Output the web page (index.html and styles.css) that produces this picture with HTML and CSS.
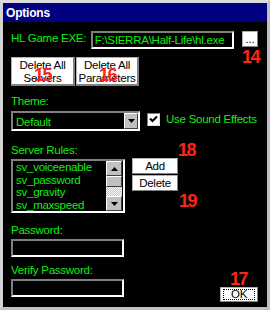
FILE: index.html
```html
<!DOCTYPE html>
<html lang="en">
<head>
<meta charset="UTF-8">
<title>Options</title>
<link rel="stylesheet" href="styles.css">
</head>
<body>
<div class="window">
    <div class="titlebar">Options</div>

    <div class="panel">
        <div class="exe-row">
            <span class="caption exe-caption">HL Game EXE:</span>
            <div class="field exe">F:\SIERRA\Half-Life\hl.exe</div>
            <button class="btn browse">...</button>
        </div>

        <div class="del-row">
            <button class="btn del servers">Delete All<br>Servers</button>
            <button class="btn del params">Delete All<br>Parameters</button>
        </div>

        <div class="caption gap-theme">Theme:</div>
        <div class="theme-row">
            <div class="field combo">
                <span class="combo-text">Default</span>
                <span class="raised drop"><svg width="7" height="4" viewBox="0 0 7 4"><path d="M0 0h7L3.5 4z" fill="#000"/></svg></span>
            </div>
            <label class="check">
                <span class="box"><svg width="9" height="9" viewBox="0 0 9 9"><path d="M1 3.5L3.5 6L8 1.5" stroke="#000" stroke-width="2" fill="none"/></svg></span>
                Use Sound Effects
            </label>
        </div>

        <div class="caption gap-rules">Server Rules:</div>
        <div class="rules-row">
            <div class="field list">
                <div class="items">
                    <div>sv_voiceenable</div>
                    <div>sv_password</div>
                    <div>sv_gravity</div>
                    <div>sv_maxspeed</div>
                </div>
                <div class="scrollbar">
                    <span class="raised arrow"><svg width="7" height="4" viewBox="0 0 7 4"><path d="M0 4h7L3.5 0z" fill="#000"/></svg></span>
                    <span class="raised thumb"></span>
                    <span class="track"></span>
                    <span class="raised arrow"><svg width="7" height="4" viewBox="0 0 7 4"><path d="M0 0h7L3.5 4z" fill="#000"/></svg></span>
                </div>
            </div>
            <div class="list-btns">
                <button class="btn small">Add</button>
                <button class="btn small">Delete</button>
            </div>
        </div>

        <div class="caption gap-pw">Password:</div>
        <div class="field pw"></div>

        <div class="caption gap-verify">Verify Password:</div>
        <div class="last-row">
            <div class="field pw"></div>
            <button class="btn ok"><span class="focus">OK</span></button>
        </div>

        <!-- callout numbers over the dialog -->
        <span class="tag t14">14</span>
        <span class="tag t15">15</span>
        <span class="tag t16">16</span>
        <span class="tag t18">18</span>
        <span class="tag t19">19</span>
        <span class="tag t17">17</span>
    </div>
</div>
</body>
</html>
```

FILE: styles.css
```css
* {
  box-sizing: border-box;
}
body {
  margin: 0;
  background: #c0c0c0;
  font-family: "Liberation Sans", Arial, sans-serif;
  font-size: 11.5px;
  letter-spacing: -0.25px;
  white-space: nowrap;
}
.window {
  width: 270px;
  height: 310px;
  display: flex;
  flex-direction: column;
  border: 3px solid #c0c0c0;
  border-top-color: #dcdcdc;
  border-left-color: #d4d4d4;
}
.titlebar {
  height: 19px;
  background: #000080;
  color: #fff;
  font-size: 12px;
  font-weight: bold;
  letter-spacing: -0.2px;
  line-height: 19px;
  padding: 1px 0 0 3px;
}
.panel {
  position: relative;
  flex: 1;
  background: #000;
  color: #10ee10;
  padding: 0 9px 0 8px;
}
.caption {
  display: block;
  line-height: 15px;
}
.field {
  background: #000;
  border: 2px solid;
  border-color: #808080 #fff #fff #808080;
}
.btn {
  background: #fff;
  color: #000;
  font: inherit;
  letter-spacing: inherit;
  padding: 0;
  border: 1px solid #b0b0b0;
  border-right-color: #808080;
  border-bottom-color: #808080;
}
.raised {
  display: flex;
  align-items: center;
  justify-content: center;
  background: #c0c0c0;
  border: 1px solid;
  border-color: #fff #404040 #404040 #fff;
}

.exe-row {
  display: flex;
  align-items: flex-start;
  margin-top: 9px;
}
.exe-caption {
  width: 80px;
}
.exe {
  width: 144px;
  height: 18px;
  line-height: 14px;
  padding-left: 2px;
}
.browse {
  width: 16px;
  height: 16px;
  margin-left: 8px;
  line-height: 12px;
}

.del-row {
  display: flex;
  gap: 1px;
  margin-top: 8px;
}
.del {
  height: 29px;
  line-height: 13px;
  padding-top: 1px;
  border-right-width: 2px;
  border-bottom-width: 2px;
}
.servers {
  width: 64px;
}
.params {
  width: 63px;
}

.gap-theme {
  margin-top: 8px;
}
.theme-row {
  display: flex;
  align-items: flex-start;
  margin-top: 2px;
}
.combo {
  width: 129px;
  height: 20px;
  display: flex;
  line-height: 16px;
  padding-left: 3px;
}
.combo-text {
  flex: 1;
  padding-top: 1px;
}
.drop {
  width: 14px;
  height: 16px;
}
.check {
  display: flex;
  align-items: center;
  margin: 2px 0 0 7px;
  line-height: 13px;
}
.box {
  width: 13px;
  height: 13px;
  margin-right: 6px;
  display: flex;
  align-items: center;
  justify-content: center;
  background: #fff;
  border: 1px solid;
  border-color: #808080 #e0e0e0 #e0e0e0 #808080;
}

.gap-rules {
  margin-top: 12px;
}
.rules-row {
  display: flex;
  align-items: flex-start;
}
.list {
  width: 114px;
  height: 54px;
  margin-top: 1px;
  display: flex;
}
.items {
  flex: 1;
  line-height: 12.7px;
  padding-left: 3px;
}
.scrollbar {
  width: 16px;
  margin-right: 1px;
  display: flex;
  flex-direction: column;
}
.arrow {
  height: 15px;
}
.thumb {
  height: 11px;
}
.track {
  flex: 1;
  background: repeating-conic-gradient(#fff 0 25%, #c0c0c0 0 50%) 0 0 / 2px 2px;
}
.list-btns {
  display: flex;
  flex-direction: column;
  gap: 1px;
  margin-left: 7px;
}
.small {
  width: 46px;
  height: 16px;
  line-height: 13px;
}

.gap-pw {
  margin-top: 10px;
}
.pw {
  width: 113px;
  height: 18px;
  margin-top: 1px;
}
.gap-verify {
  margin-top: 6px;
}
.last-row {
  display: flex;
  align-items: flex-start;
}
.ok {
  width: 38px;
  height: 15px;
  margin: 9px 0 0 auto;
  padding: 1px 2px;
}
.focus {
  display: block;
  height: 11px;
  line-height: 9px;
  border: 1px dotted #000;
}

.tag {
  position: absolute;
  color: #ff2418;
  font-size: 18px;
  font-weight: bold;
  letter-spacing: -1.5px;
  line-height: 18px;
}
.t14 { left: 239px; top: 26px; }
.t15 { left: 31px; top: 44px; }
.t16 { left: 96px; top: 44px; }
.t18 { left: 175px; top: 119px; }
.t19 { left: 176px; top: 170px; }
.t17 { left: 227px; top: 248px; }
```
